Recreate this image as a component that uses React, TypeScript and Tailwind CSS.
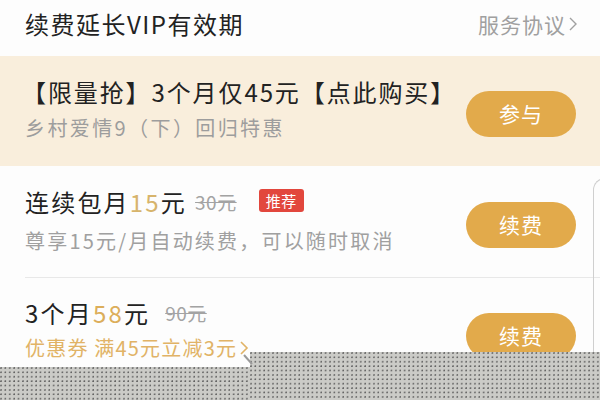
import React from "react";

const font = { fontFamily: '"Noto Sans CJK SC", "Noto Sans", sans-serif' };

function Btn({ label }: { label: string }) {
  return (
    <div className="w-[110px] h-[46px] rounded-full bg-[#e2aa4b] text-white text-[21px] tracking-[1px] flex items-center justify-center shrink-0">
      {label}
    </div>
  );
}

export default function App() {
  return (
    <div
      className="relative w-[600px] h-[400px] overflow-hidden bg-[#fdfdfd] text-[#222]"
      style={font}
    >
      {/* header */}
      <div className="h-[56px] flex items-center justify-between pl-[25px] pr-[22px] bg-[#fdfdfd]">
        <div className="text-[24px] leading-[30px] tracking-[1.5px] text-[#222] -mt-[8px]">
          续费延长VIP有效期
        </div>
        <div className="flex items-center text-[21px] leading-[30px] tracking-[1px] text-[#a0a0a0] -mt-[8px]">
          <span>服务协议</span>
          <svg width="10" height="18" viewBox="0 0 10 18" className="ml-[2px]">
            <path d="M2 3 L8 9 L2 15" fill="none" stroke="#a0a0a0" strokeWidth="1.4" />
          </svg>
        </div>
      </div>

      {/* promo */}
      <div className="h-[110px] bg-[#f9eedc] flex items-start justify-between pl-[22px] pr-[24px]">
        <div className="flex flex-col pt-[21px]">
          <div className="text-[24px] leading-[30px] tracking-[1.9px] text-[#222]">
            【限量抢】3个月仅45元【点此购买】
          </div>
          <div className="text-[20px] leading-[30px] tracking-[2.4px] text-[#9d9d9d] mt-[6px] pl-[3px]">
            乡村爱情9（下）回归特惠
          </div>
        </div>
        <div className="mt-[35px]">
          <Btn label="参与" />
        </div>
      </div>

      {/* row 1 */}
      <div className="ml-[25px] h-[112px] border-b border-[#e8e8e8] flex items-start justify-between pr-[24px]">
        <div className="flex flex-col pt-[21px]">
          <div className="flex items-center h-[30px] tracking-[2.2px]">
            <span className="text-[24px] leading-[30px]">连续包月</span>
            <span className="text-[24px] leading-[30px] text-[#d7b46c]">15</span>
            <span className="text-[24px] leading-[30px]">元</span>
            <span className="ml-[8px] text-[19px] leading-[30px] tracking-[0.5px] text-[#a3a3a3] line-through">30元</span>
            <span className="ml-[22px] h-[23px] px-[7px] rounded-[3px] bg-[#e2473d] text-white text-[15px] leading-[23px] tracking-[0.5px] -mt-[4px]">
              推荐
            </span>
          </div>
          <div className="text-[20px] leading-[30px] tracking-[2.2px] text-[#a0a0a0] mt-[9px]">
            尊享15元/月自动续费，可以随时取消
          </div>
        </div>
        <div className="mt-[36px]">
          <Btn label="续费" />
        </div>
      </div>

      {/* row 2 */}
      <div className="ml-[25px] h-[122px] flex items-start justify-between pr-[24px]">
        <div className="flex flex-col pt-[20px]">
          <div className="flex items-center h-[30px] tracking-[2.2px]">
            <span className="text-[24px] leading-[30px]">3个月</span>
            <span className="text-[24px] leading-[30px] text-[#dcae5a]">58</span>
            <span className="text-[24px] leading-[30px]">元</span>
            <span className="ml-[15px] text-[19px] leading-[30px] tracking-[0.5px] text-[#a3a3a3] line-through">90元</span>
          </div>
          <div className="flex items-center text-[20px] leading-[30px] tracking-[1.2px] text-[#e1b366] mt-[5px]">
            <span>优惠券 满45元立减3元</span>
            <svg width="12" height="18" viewBox="0 0 12 18" className="ml-[1px]">
              <path d="M3 3 L9 9 L3 15" fill="none" stroke="#e1b366" strokeWidth="1.6" />
            </svg>
          </div>
        </div>
        <div className="mt-[35px]">
          <Btn label="续费" />
        </div>
      </div>

      {/* right edge frame line */}
      <div className="absolute left-[593px] top-[178px] w-[12px] h-[240px] border-l-[1.5px] border-t-[1.5px] border-[#cfcfcf] rounded-tl-[12px]" />

      {/* torn dotted overlay */}
      <div className="absolute left-[250px] top-[352px] w-[350px] h-[48px] bg-[#cbcbc7] bg-[radial-gradient(circle_at_1px_1px,#5f5f5f_0.6px,transparent_0.95px)] bg-[length:4.4px_4.4px]" />
      <div className="absolute left-0 top-[367px] w-[250px] h-[33px] bg-[#cbcbc7] bg-[radial-gradient(circle_at_1px_1px,#5f5f5f_0.6px,transparent_0.95px)] bg-[length:4.4px_4.4px]" />
      <svg className="absolute left-[240px] top-[352px]" width="20" height="16" viewBox="0 0 20 16">
        <path d="M4 3 L12 12" stroke="#9a9a9a" strokeWidth="2" />
      </svg>
    </div>
  );
}
